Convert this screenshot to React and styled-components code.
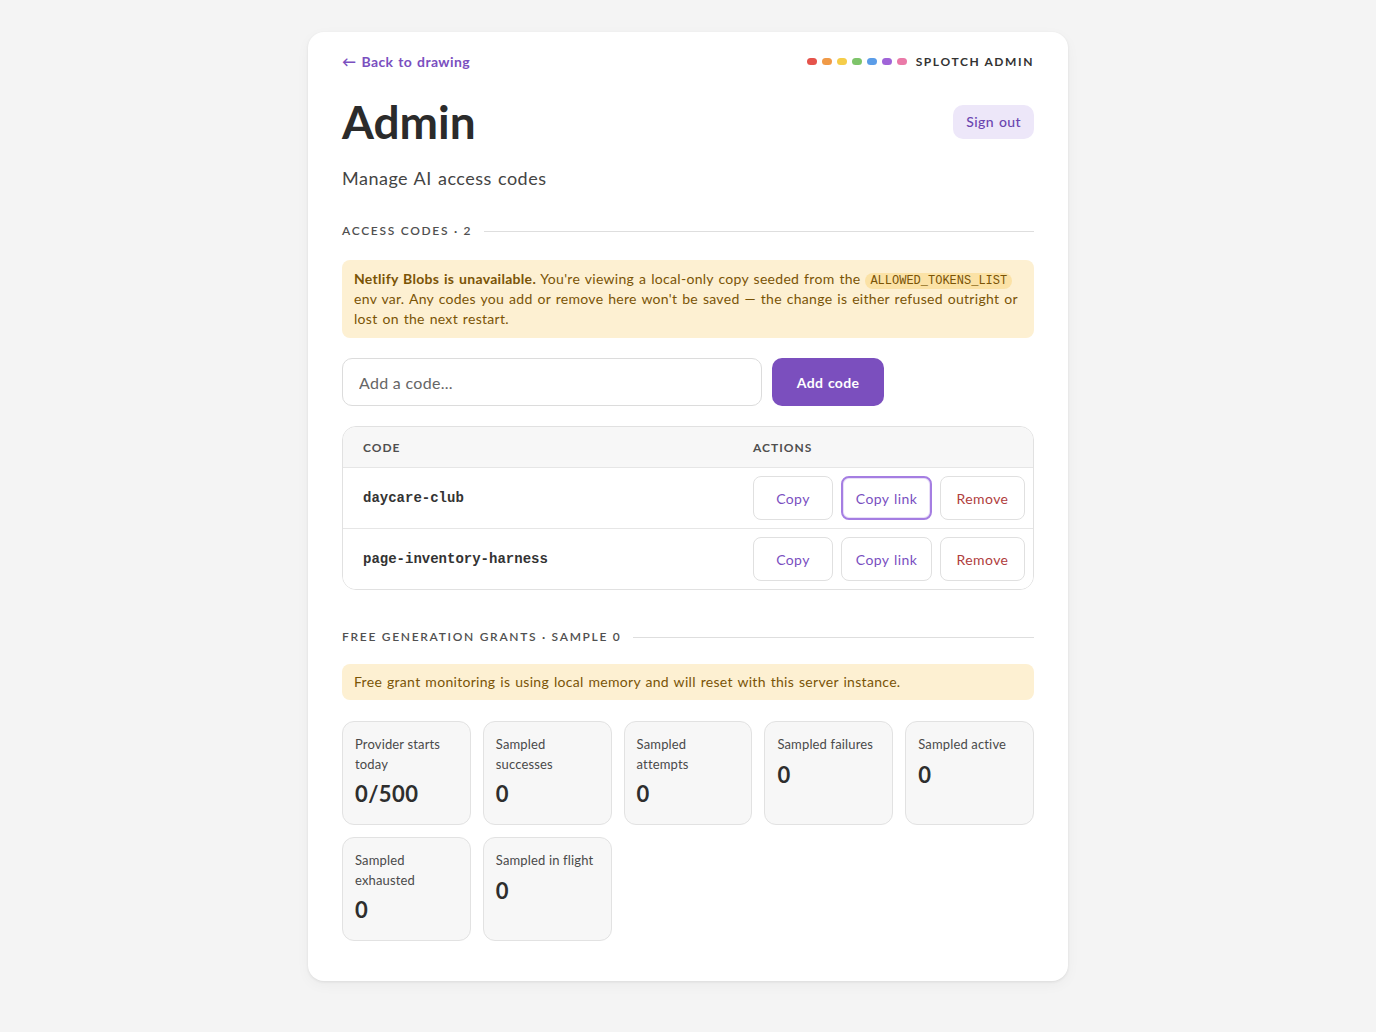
import styled, { createGlobalStyle } from "styled-components";

const GlobalStyle = createGlobalStyle`
  body {
    margin: 0;
    background: #f4f4f4;
    font-family: Lato, "Noto Sans", sans-serif;
    color: #2f2f2f;
  }
`;

const Page = styled.div`
  padding: 32px 0 51px;
  display: flex;
  justify-content: center;
`;

const Card = styled.main`
  width: 760px;
  box-sizing: border-box;
  background: #fff;
  border-radius: 16px;
  box-shadow: 0 1px 3px rgba(0, 0, 0, 0.08), 0 4px 14px rgba(0, 0, 0, 0.04);
  padding: 19px 34px 40px;
`;

const TopBar = styled.div`
  display: flex;
  justify-content: space-between;
  align-items: center;
  height: 20px;
`;

const BackLink = styled.a`
  color: #7a4fbf;
  font-size: 14px;
  font-weight: 700;
  letter-spacing: 0.4px;
  word-spacing: 1px;
  text-decoration: none;
  display: flex;
  align-items: center;
  gap: 5px;
`;

const Brand = styled.div`
  display: flex;
  align-items: center;
  gap: 9px;
  font-size: 12px;
  font-weight: 700;
  letter-spacing: 1.6px;
  color: #333;
`;

const Dots = styled.div`
  display: flex;
  gap: 5px;
`;

const Dot = styled.span`
  width: 10px;
  height: 7px;
  border-radius: 4px;
  background: ${(p) => p.$c};
`;

const TitleRow = styled.div`
  display: flex;
  justify-content: space-between;
  align-items: center;
  margin-top: 23px;
`;

const Title = styled.h1`
  margin: 0;
  font-size: 46px;
  line-height: 55px;
  font-weight: 700;
  color: #2b2b2b;
`;

const SignOut = styled.button`
  height: 34px;
  padding: 0 13px;
  border: none;
  border-radius: 10px;
  background: #ede7f9;
  color: #6a45b0;
  font-family: inherit;
  font-size: 14px;
  font-weight: 500;
  letter-spacing: 0.4px;
  word-spacing: 1px;
`;

const Subtitle = styled.p`
  margin: 17px 0 0;
  font-size: 18px;
  line-height: 24px;
  letter-spacing: 0.5px;
  word-spacing: 1px;
  color: #444;
`;

const SectionLabel = styled.div`
  display: flex;
  align-items: center;
  gap: 12px;
  margin-top: ${(p) => p.$top}px;
  font-size: 12px;
  line-height: 16px;
  letter-spacing: 1.7px;
  font-weight: 600;
  color: #505050;
  white-space: nowrap;

  &::after {
    content: "";
    flex: 1;
    height: 1px;
    background: #dedede;
  }
`;

const Notice = styled.div`
  margin-top: ${(p) => p.$top}px;
  background: #fdf0d2;
  border-radius: 8px;
  padding: ${(p) => p.$pad};
  font-size: 14px;
  line-height: 20px;
  letter-spacing: 0.3px;
  word-spacing: 1px;
  color: #7a5406;

  strong {
    font-weight: 700;
  }
`;

const Chip = styled.code`
  font-family: "Liberation Mono", monospace;
  font-size: 12px;
  line-height: 16px;
  letter-spacing: 0;
  background: #fbe2a6;
  border-radius: 8px;
  padding: 1px 5px;
`;

const AddRow = styled.form`
  display: flex;
  gap: 10px;
  margin-top: 20px;
`;

const CodeInput = styled.input`
  width: 420px;
  height: 48px;
  box-sizing: border-box;
  border: 1px solid #dcdcdc;
  border-radius: 10px;
  padding: 0 16px;
  font-family: inherit;
  font-size: 16px;
  letter-spacing: 0.3px;
  color: #333;

  &::placeholder {
    color: #666;
  }
`;

const AddButton = styled.button`
  width: 112px;
  height: 48px;
  border: none;
  border-radius: 10px;
  background: #7b4fbe;
  color: #fff;
  font-family: inherit;
  font-size: 14px;
  font-weight: 700;
  letter-spacing: 0.3px;
  word-spacing: 1px;
`;

const Table = styled.div`
  margin-top: 20px;
  border: 1px solid #e1e1e1;
  border-radius: 14px;
  overflow: hidden;
`;

const Row = styled.div`
  display: grid;
  grid-template-columns: 1fr 280px;
  align-items: center;
  height: ${(p) => (p.$head ? 40 : 60)}px;
  background: ${(p) => (p.$head ? "#f7f7f7" : "#fff")};
  border-top: ${(p) => (p.$first ? "none" : "1px solid #e6e6e6")};
`;

const HeadCell = styled.div`
  font-size: 12px;
  font-weight: 700;
  letter-spacing: 1px;
  color: #4f4f4f;
  padding-left: ${(p) => p.$pl}px;
`;

const CodeCell = styled.div`
  padding-left: 20px;
  font-family: "Liberation Mono", monospace;
  font-size: 14px;
  font-weight: 700;
  color: #333;
`;

const Actions = styled.div`
  display: flex;
  gap: 8px;
`;

const ActionButton = styled.button`
  height: 44px;
  width: ${(p) => p.$w}px;
  box-sizing: border-box;
  background: #fff;
  border: ${(p) => (p.$focus ? "2px solid #a57ee2" : "1px solid #e0e0e0")};
  box-shadow: ${(p) => (p.$focus ? "inset 0 0 0 1px #e9dff8" : "none")};
  border-radius: 8px;
  font-family: inherit;
  font-size: 14px;
  letter-spacing: 0.4px;
  word-spacing: 1px;
  color: ${(p) => (p.$danger ? "#b03d3d" : "#7a4fbf")};
`;

const Stats = styled.div`
  display: grid;
  grid-template-columns: repeat(5, 1fr);
  gap: 12px;
  margin-top: 21px;
`;

const Stat = styled.div`
  background: #f7f7f7;
  border: 1px solid #e2e2e2;
  border-radius: 12px;
  padding: 13px 12px 16px;
  min-height: 104px;
  box-sizing: border-box;
`;

const StatLabel = styled.div`
  font-size: 13px;
  line-height: 19.5px;
  letter-spacing: 0.15px;
  color: #4a4a4a;
`;

const StatValue = styled.div`
  margin-top: 6px;
  font-size: 22px;
  line-height: 28px;
  font-weight: 700;
  letter-spacing: 0.4px;
  color: #2e2e2e;
`;

const dotColors = ["#e5534b", "#f09a47", "#f5cd4a", "#7ec46a", "#5b9de8", "#a064d8", "#ea7aa8"];

const codes = ["daycare-club", "page-inventory-harness"];

const stats = [
  ["Provider starts today", "0/500"],
  ["Sampled successes", "0"],
  ["Sampled attempts", "0"],
  ["Sampled failures", "0"],
  ["Sampled active", "0"],
  ["Sampled exhausted", "0"],
  ["Sampled in flight", "0"],
];

export default function App() {
  return (
    <>
      <GlobalStyle />
      <Page>
        <Card>
          <TopBar>
            <BackLink href="#">
              <span>←</span> Back to drawing
            </BackLink>
            <Brand>
              <Dots>
                {dotColors.map((c) => (
                  <Dot key={c} $c={c} />
                ))}
              </Dots>
              SPLOTCH ADMIN
            </Brand>
          </TopBar>

          <TitleRow>
            <Title>Admin</Title>
            <SignOut>Sign out</SignOut>
          </TitleRow>
          <Subtitle>Manage AI access codes</Subtitle>

          <SectionLabel $top={33}>ACCESS CODES · 2</SectionLabel>
          <Notice $top={21} $pad="9px 12px 9px">
            <strong>Netlify Blobs is unavailable.</strong> You're viewing a local-only copy
            seeded from the <Chip>ALLOWED_TOKENS_LIST</Chip> env var. Any codes you add or
            remove here won't be saved — the change is either refused outright or lost on the
            next restart.
          </Notice>

          <AddRow onSubmit={(e) => e.preventDefault()}>
            <CodeInput placeholder="Add a code..." />
            <AddButton type="submit">Add code</AddButton>
          </AddRow>

          <Table>
            <Row $head $first>
              <HeadCell $pl={20}>CODE</HeadCell>
              <HeadCell $pl={0}>ACTIONS</HeadCell>
            </Row>
            {codes.map((code, i) => (
              <Row key={code}>
                <CodeCell>{code}</CodeCell>
                <Actions>
                  <ActionButton $w={80}>Copy</ActionButton>
                  <ActionButton $w={91} $focus={i === 0}>
                    Copy link
                  </ActionButton>
                  <ActionButton $w={85} $danger>
                    Remove
                  </ActionButton>
                </Actions>
              </Row>
            ))}
          </Table>

          <SectionLabel $top={39}>FREE GENERATION GRANTS · SAMPLE 0</SectionLabel>
          <Notice $top={19} $pad="8px 12px">
            Free grant monitoring is using local memory and will reset with this server instance.
          </Notice>

          <Stats>
            {stats.map(([label, value]) => (
              <Stat key={label}>
                <StatLabel>{label}</StatLabel>
                <StatValue>{value}</StatValue>
              </Stat>
            ))}
          </Stats>
        </Card>
      </Page>
    </>
  );
}
